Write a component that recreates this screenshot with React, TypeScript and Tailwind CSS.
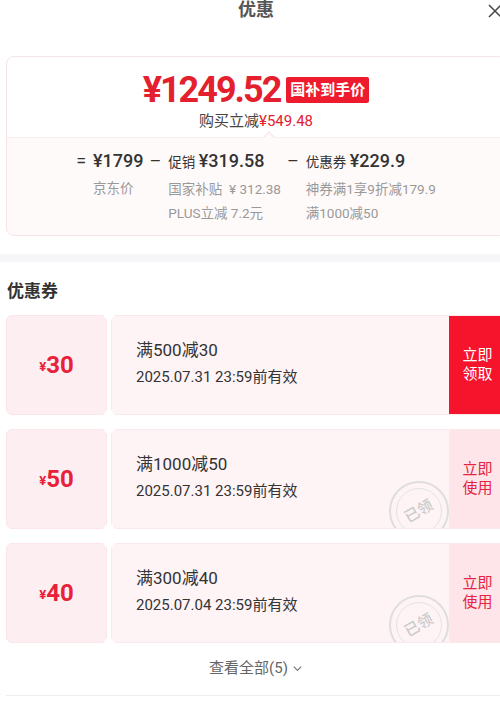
import React from 'react';

const coupons = [
  { amount: '30', title: '满500减30', date: '2025.07.31 23:59前有效', claimed: false, action: ['立即', '领取'] },
  { amount: '50', title: '满1000减50', date: '2025.07.31 23:59前有效', claimed: true, action: ['立即', '使用'] },
  { amount: '40', title: '满300减40', date: '2025.07.04 23:59前有效', claimed: true, action: ['立即', '使用'] },
];

function Stamp() {
  return (
    <div className="absolute right-[0px] top-[51px] w-[60px] h-[60px] rounded-full border-2 border-[#dedede] flex items-center justify-center">
      <div className="w-[46px] h-[46px] rounded-full border border-[#e2e2e2] flex items-center justify-center">
        <span className="-rotate-[30deg] text-[15px] leading-none text-[#cbcbcb] font-medium">已领</span>
      </div>
    </div>
  );
}

function CouponCard({ c }: { c: (typeof coupons)[number] }) {
  return (
    <div className="relative flex h-[100px] gap-[4px]">
      <div className="w-[101px] shrink-0 rounded-[6px] bg-[#fdeff1] border border-[#fbe5e9] flex items-center justify-center text-[#e8203a]">
        <span className="text-[13px] font-bold mt-[4px]">¥</span>
        <span className="text-[24px] font-bold leading-none">{c.amount}</span>
      </div>
      {/* notches between stub and body */}
      <div className="absolute left-[98px] -top-[5px] w-[10px] h-[10px] rounded-full bg-white" />
      <div className="absolute left-[98px] -bottom-[5px] w-[10px] h-[10px] rounded-full bg-white" />
      <div className="flex flex-1 rounded-l-[6px] overflow-hidden border border-r-0 border-[#fbe8ec]">
        <div className="relative flex-1 bg-[#fef4f6] pl-[24px] pt-[23px] overflow-hidden">
          <div className="text-[17px] leading-[22px] text-[#333]">{c.title}</div>
          <div className="mt-[5px] text-[15px] leading-[22px] text-[#333]">{c.date}</div>
          {c.claimed && <Stamp />}
        </div>
        <div
          className={
            c.claimed
              ? 'w-[57px] shrink-0 bg-[#fde5ea] text-[#e5243f] flex flex-col items-center justify-center text-[15px] leading-[19px]'
              : 'w-[57px] shrink-0 bg-[#f5142b] text-white flex flex-col items-center justify-center text-[15px] leading-[19px]'
          }
        >
          <span>{c.action[0]}</span>
          <span>{c.action[1]}</span>
        </div>
      </div>
    </div>
  );
}

export default function App() {
  return (
    <div
      className="w-[500px] h-[708px] overflow-hidden bg-white"
      style={{ fontFamily: 'Roboto, "Noto Sans CJK SC", sans-serif' }}
    >
      <div className="w-[512px]">
        {/* header */}
        <div className="relative h-[56px]">
          <div className="text-center text-[18px] leading-[20px] font-bold text-[#555]">优惠</div>
          <svg className="absolute right-[10px] top-[4px] w-[14px] h-[14px]" viewBox="0 0 14 14" fill="none" stroke="#444" strokeWidth="1.5">
            <path d="M1 1l12 12M13 1L1 13" />
          </svg>
        </div>

        {/* price summary */}
        <div className="mx-[6px] rounded-[8px] border border-[#f3e4e6] overflow-hidden">
          <div className="h-[80px] pt-[18px] flex flex-col items-center">
            <div className="flex items-center gap-[6px]">
              <span className="text-[36px] leading-[30px] font-bold tracking-[-2px] text-[#e4202e]">¥1249.52</span>
              <span className="h-[26px] px-[4px] rounded-[2px] bg-[#ee1b2e] text-white text-[15px] font-bold leading-[26px]">国补到手价</span>
            </div>
            <div className="mt-[6px] text-[15px] leading-[20px] text-[#444]">
              购买立减<span className="text-[#e4202e]">¥549.48</span>
            </div>
          </div>
          <div className="relative bg-[#fffafa] border-t border-[#f8eeee] pt-[11px] pb-[12px]">
            <div className="absolute left-[258px] -top-[5px] w-[8px] h-[8px] rotate-45 bg-[#fffafa] border-l border-t border-[#f3e4e6]" />
            <div className="flex justify-center gap-[6px]">
              <div className="flex gap-[7px]">
                <span className="text-[18px] leading-[24px] text-[#333]">=</span>
                <div className="flex flex-col">
                  <span className="text-[18px] leading-[24px] font-medium text-[#333]">¥1799</span>
                  <span className="mt-[5px] text-[13.5px] leading-[20px] text-[#999]">京东价</span>
                </div>
              </div>
              <div className="flex gap-[7px]">
                <span className="text-[18px] leading-[24px] text-[#333]">–</span>
                <div className="flex flex-col">
                  <span className="leading-[24px] text-[#333]">
                    <span className="text-[13.5px]">促销 </span>
                    <span className="text-[18px] font-medium">¥319.58</span>
                  </span>
                  <span className="mt-[5px] text-[13.5px] leading-[20px] text-[#999] whitespace-pre">国家补贴  ¥ 312.38</span>
                  <span className="mt-[4px] text-[13.5px] leading-[20px] text-[#999]">PLUS立减 7.2元</span>
                </div>
              </div>
              <div className="flex gap-[7px]">
                <span className="text-[18px] leading-[24px] text-[#333]">–</span>
                <div className="flex flex-col">
                  <span className="leading-[24px] text-[#333]">
                    <span className="text-[13.5px]">优惠券 </span>
                    <span className="text-[18px] font-medium">¥229.9</span>
                  </span>
                  <span className="mt-[5px] text-[13.5px] leading-[20px] text-[#999]">神券满1享9折减179.9</span>
                  <span className="mt-[4px] text-[13.5px] leading-[20px] text-[#999]">满1000减50</span>
                </div>
              </div>
            </div>
          </div>
        </div>

        <div className="mt-[18px] h-[8px] bg-[#f6f6f9]" />

        {/* coupons */}
        <div className="px-[6px]">
          <div className="mt-[17px] pl-[1px] text-[17px] leading-[24px] font-bold text-[#333]">优惠券</div>
          <div className="mt-[12px] flex flex-col gap-[14px]">
            {coupons.map((c) => (
              <CouponCard key={c.title} c={c} />
            ))}
          </div>
          <div className="mt-[15px] flex items-center justify-center gap-[4px] text-[15px] leading-[20px] text-[#666]">
            <span>查看全部(5)</span>
            <svg className="w-[11px] h-[11px]" viewBox="0 0 12 12" fill="none" stroke="#777" strokeWidth="1.3">
              <path d="M2 4l4 4 4-4" />
            </svg>
          </div>
          <div className="mt-[17px] h-px bg-[#eeeeee]" />
        </div>
      </div>
    </div>
  );
}
